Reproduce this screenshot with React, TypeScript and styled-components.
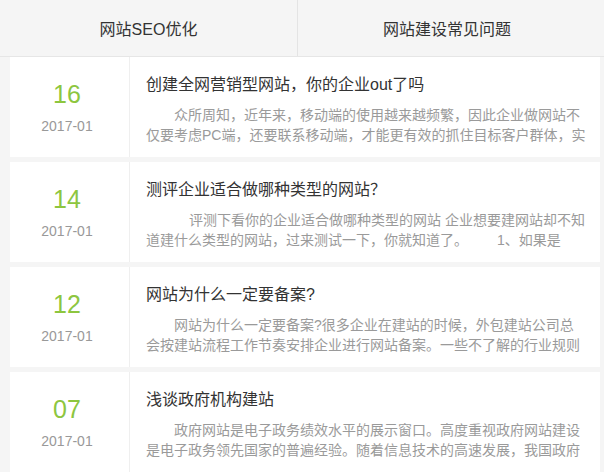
import React from "react";
import styled, { createGlobalStyle } from "styled-components";

const GlobalStyle = createGlobalStyle`
  html, body {
    margin: 0;
    padding: 0;
    background: #f5f5f5;
  }
  body {
    font-family: "Liberation Sans", "Noto Sans CJK SC", sans-serif;
    overflow: hidden;
    text-spacing-trim: space-all;
    font-feature-settings: "chws" 0, "halt" 0, "palt" 0;
  }
  * { box-sizing: border-box; }
`;

const Page = styled.div`
  width: 604px;
  height: 472px;
  overflow: hidden;
  background: #f5f5f5;
`;

const TabBar = styled.div`
  height: 57px;
  background: #f5f5f5;
  border-bottom: 1px solid #e6e6e6;
`;

const TabRow = styled.div`
  width: 596px;
  height: 56px;
  display: grid;
  grid-template-columns: 1fr 1fr;
`;

const Tab = styled.div<{ $divider?: boolean }>`
  display: flex;
  align-items: center;
  justify-content: center;
  font-size: 16px;
  color: #333;
  border-right: ${(p) => (p.$divider ? "1px solid #e4e4e4" : "none")};
`;

const List = styled.div`
  display: flex;
  flex-direction: column;
  gap: 5px;
  padding: 0 4px 0 10px;
`;

const Card = styled.div`
  height: 100px;
  background: #fff;
  display: flex;
`;

const DateCol = styled.div`
  width: 120px;
  flex-shrink: 0;
  border-right: 1px solid #efefef;
  display: flex;
  flex-direction: column;
  align-items: center;
  padding: 21px 5px 0 0;
`;

const Day = styled.div`
  font-size: 25px;
  line-height: 32px;
  color: #8dc63f;
`;

const Month = styled.div`
  font-size: 14px;
  line-height: 32px;
  color: #999;
`;

const Body = styled.div`
  flex: 1;
  min-width: 0;
  padding: 16px 14px 0 16px;
`;

const Title = styled.div`
  font-size: 16px;
  line-height: 24px;
  color: #333;
  white-space: nowrap;
  overflow: hidden;
`;

const Summary = styled.div<{ $indent: number }>`
  margin-top: 8px;
  font-size: 14px;
  line-height: 20px;
  height: 40px;
  overflow: hidden;
  color: #9a9a9a;
  text-indent: ${(p) => p.$indent}px;
`;

const Gap = styled.span`
  display: inline-block;
  width: 29px;
`;

type Item = {
  day: string;
  month: string;
  title: string;
  indent: number;
  summary: React.ReactNode;
};

const items: Item[] = [
  {
    day: "16",
    month: "2017-01",
    title: "创建全网营销型网站，你的企业out了吗",
    indent: 28,
    summary:
      "众所周知，近年来，移动端的使用越来越频繁，因此企业做网站不仅要考虑PC端，还要联系移动端，才能更有效的抓住目标客户群体，实现更好的营销效果。",
  },
  {
    day: "14",
    month: "2017-01",
    title: "测评企业适合做哪种类型的网站？",
    indent: 43,
    summary: (
      <>
        评测下看你的企业适合做哪种类型的网站 企业想要建网站却不知道建什么类型的网站，过来测试一下，你就知道了。
        <Gap />
        1、如果是
      </>
    ),
  },
  {
    day: "12",
    month: "2017-01",
    title: "网站为什么一定要备案?",
    indent: 28,
    summary:
      "网站为什么一定要备案?很多企业在建站的时候，外包建站公司总会按建站流程工作节奏安排企业进行网站备案。一些不了解的行业规则的企业就会问：",
  },
  {
    day: "07",
    month: "2017-01",
    title: "浅谈政府机构建站",
    indent: 28,
    summary:
      "政府网站是电子政务绩效水平的展示窗口。高度重视政府网站建设是电子政务领先国家的普遍经验。随着信息技术的高速发展，我国政府网站建设也取得了长足进步。",
  },
];

export default function App() {
  return (
    <Page lang="zh-CN">
      <GlobalStyle />
      <TabBar>
        <TabRow>
          <Tab $divider>网站SEO优化</Tab>
          <Tab>网站建设常见问题</Tab>
        </TabRow>
      </TabBar>
      <List>
        {items.map((it) => (
          <Card key={it.day}>
            <DateCol>
              <Day>{it.day}</Day>
              <Month>{it.month}</Month>
            </DateCol>
            <Body>
              <Title>{it.title}</Title>
              <Summary $indent={it.indent}>{it.summary}</Summary>
            </Body>
          </Card>
        ))}
      </List>
    </Page>
  );
}
